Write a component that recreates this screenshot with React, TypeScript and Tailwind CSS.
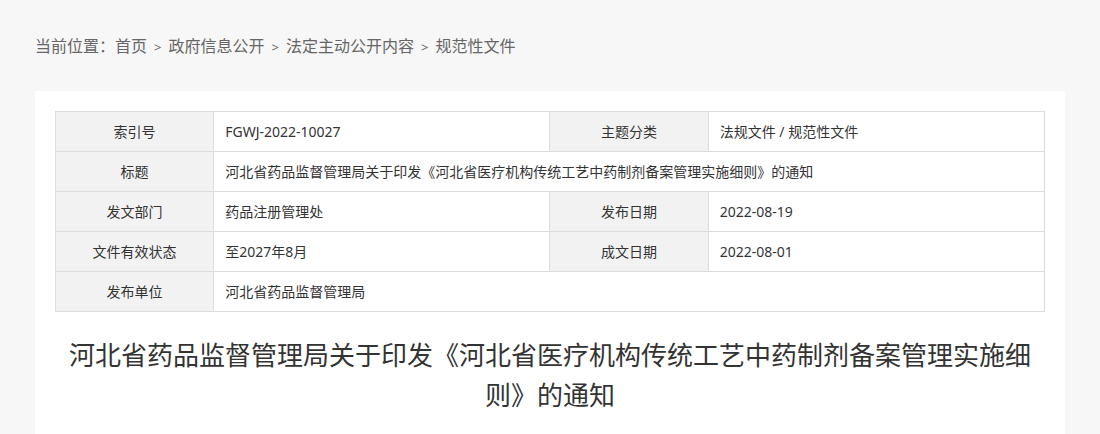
import React from "react";

const font = { fontFamily: '"Noto Sans", "Noto Sans CJK SC", sans-serif' };

const crumbs = ["首页", "政府信息公开", "法定主动公开内容", "规范性文件"];

const Label: React.FC<{ children: React.ReactNode }> = ({ children }) => (
  <td className="border border-[#dcdcdc] bg-[#f2f2f2] text-center text-[14px] text-[#333]">{children}</td>
);

const Value: React.FC<{ children: React.ReactNode; span?: number }> = ({ children, span }) => (
  <td colSpan={span} className="border border-[#dcdcdc] bg-white pl-[11px] text-[14px] text-[#333]">
    {children}
  </td>
);

export default function App() {
  return (
    <div className="min-h-[434px] bg-[#f7f7f7] pt-[34px]" style={font}>
      <div className="px-[35px] text-[16px] leading-[24px] text-[#666]">
        当前位置：
        {crumbs.map((c, i) => (
          <span key={c}>
            {i > 0 && <span className="px-[7px] text-[13px]">&gt;</span>}
            {c}
          </span>
        ))}
      </div>

      <div className="mx-[35px] mt-[32px] bg-white px-[20px] pt-[20px] pb-[30px]">
        <table className="w-full table-fixed border-collapse">
          <colgroup>
            <col className="w-[16%]" />
            <col className="w-[34%]" />
            <col className="w-[16%]" />
            <col className="w-[34%]" />
          </colgroup>
          <tbody>
            <tr className="h-[40px]">
              <Label>索引号</Label>
              <Value>FGWJ-2022-10027</Value>
              <Label>主题分类</Label>
              <Value>法规文件 / 规范性文件</Value>
            </tr>
            <tr className="h-[40px]">
              <Label>标题</Label>
              <Value span={3}>河北省药品监督管理局关于印发《河北省医疗机构传统工艺中药制剂备案管理实施细则》的通知</Value>
            </tr>
            <tr className="h-[40px]">
              <Label>发文部门</Label>
              <Value>药品注册管理处</Value>
              <Label>发布日期</Label>
              <Value>2022-08-19</Value>
            </tr>
            <tr className="h-[40px]">
              <Label>文件有效状态</Label>
              <Value>至2027年8月</Value>
              <Label>成文日期</Label>
              <Value>2022-08-01</Value>
            </tr>
            <tr className="h-[40px]">
              <Label>发布单位</Label>
              <Value span={3}>河北省药品监督管理局</Value>
            </tr>
          </tbody>
        </table>

        <h1 className="mt-[23px] text-center text-[26px] leading-[40px] font-normal text-[#333]">
          河北省药品监督管理局关于印发《河北省医疗机构传统工艺中药制剂备案管理实施细则》的通知
        </h1>
      </div>
    </div>
  );
}
